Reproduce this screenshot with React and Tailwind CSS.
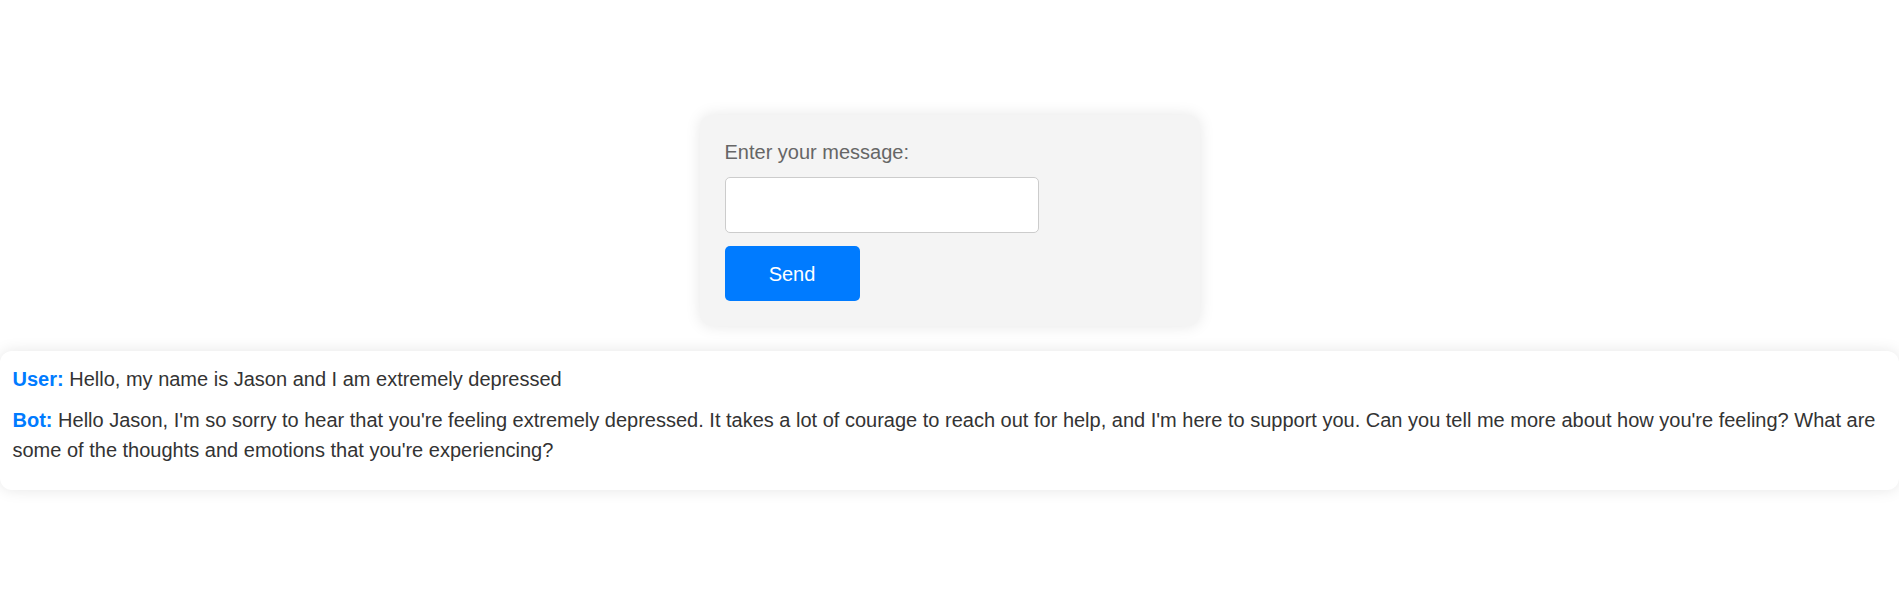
import React, { useState } from "react";

export default function App() {
  const [text, setText] = useState("");

  const messages = [
    { from: "User", text: "Hello, my name is Jason and I am extremely depressed" },
    {
      from: "Bot",
      text: "Hello Jason, I'm so sorry to hear that you're feeling extremely depressed. It takes a lot of courage to reach out for help, and I'm here to support you. Can you tell me more about how you're feeling? What are some of the thoughts and emotions that you're experiencing?",
    },
  ];

  return (
    <div className="min-h-screen bg-white pt-[115px] font-['Liberation_Sans',Arial,sans-serif] text-[#333]">
      {/* form card */}
      <div className="mx-auto w-[500px] rounded-[12px] bg-[#f4f4f4] p-[25px] shadow-[0_0_15px_rgba(0,0,0,0.1)]">
        <label className="mt-[1px] block text-[20px] leading-[23px] text-[#666]">Enter your message:</label>
        <input
          className="mt-[13px] block h-[56px] w-[314px] rounded-[5px] border border-[#ccc] bg-white px-3 text-[20px] outline-none"
          value={text}
          onChange={(e) => setText(e.target.value)}
        />
        <button className="mt-[13px] block h-[55px] w-[135px] rounded-[5px] bg-[#007bff] text-[20px] text-white">
          Send
        </button>
      </div>

      {/* chat log */}
      <div className="mt-[25px] rounded-[12px] bg-white px-[12.5px] pt-[13px] pb-[14px] shadow-[0_0_15px_rgba(0,0,0,0.1)]">
        {messages.map((m, i) => (
          <p key={i} className="mb-[11px] text-[20px] leading-[30px]">
            <strong className="text-[#007bff]">{m.from}:</strong> {m.text}
          </p>
        ))}
      </div>
    </div>
  );
}
